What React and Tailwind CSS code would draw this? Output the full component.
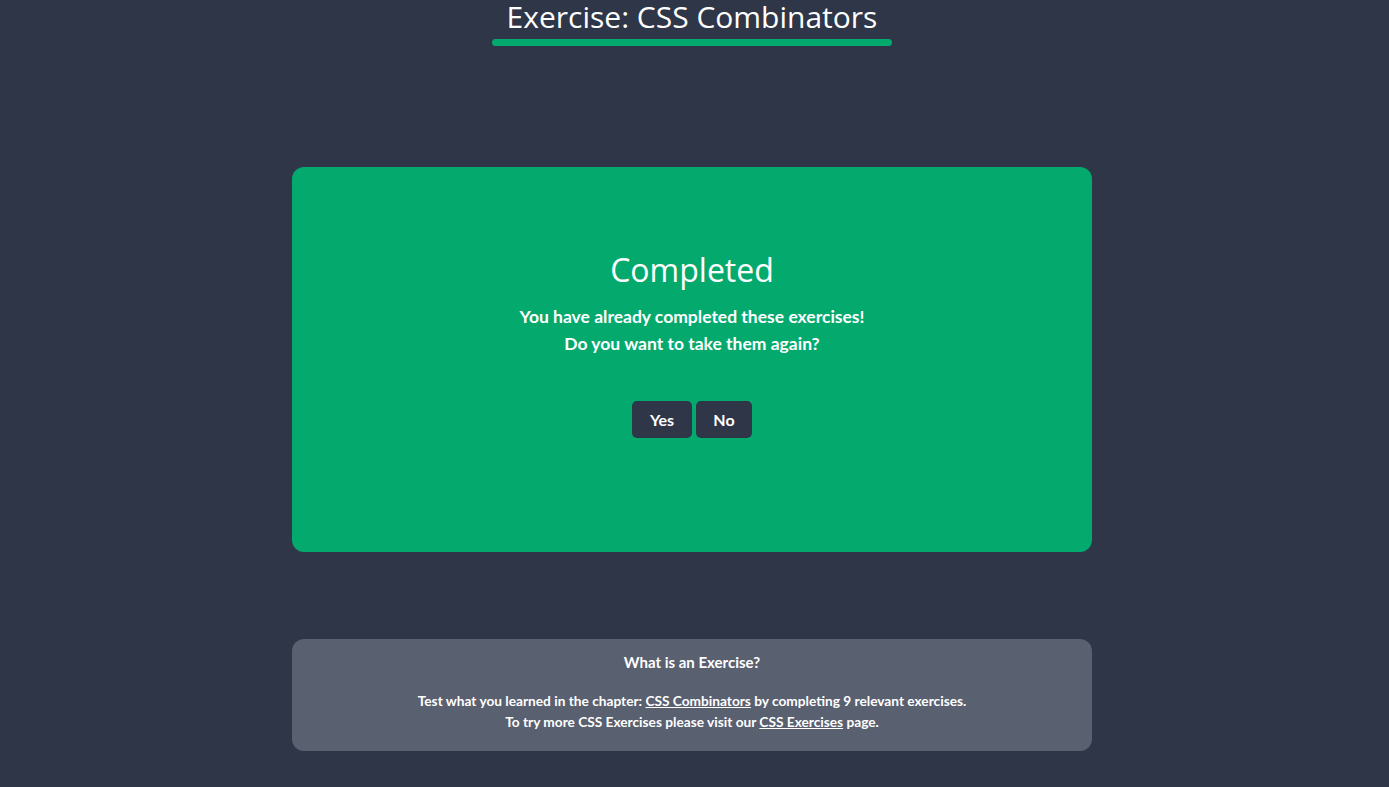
export default function App() {
  return (
    <div className="min-h-[787px] bg-[#2e3648] text-white flex flex-col items-center pr-[5px]" style={{ fontFamily: 'Lato, "Open Sans", sans-serif' }}>
      {/* Heading */}
      <div className="w-[400px] flex flex-col items-center">
        <h1 className="text-[30px] leading-[34px] font-normal" style={{ fontFamily: '"Open Sans", sans-serif' }}>
          Exercise: CSS Combinators
        </h1>
        <div className="mt-[5px] h-[7px] w-full rounded-full bg-[#04aa6d]" />
      </div>

      {/* Completed card */}
      <div className="mt-[121px] w-[800px] h-[385px] rounded-xl bg-[#04aa6d] flex flex-col items-center pt-[81px]">
        <h2 className="text-[32px] leading-[44px] font-normal" style={{ fontFamily: '"Open Sans", sans-serif' }}>
          Completed
        </h2>
        <p className="mt-[11px] text-[17.5px] leading-[27px] font-bold text-center">
          You have already completed these exercises!
          <br />
          Do you want to take them again?
        </p>
        <div className="mt-[44px] flex gap-[4px]">
          <button className="w-[60px] h-[37px] rounded-[5px] bg-[#2e3648] text-[16px] font-bold">Yes</button>
          <button className="w-[56px] h-[37px] rounded-[5px] bg-[#2e3648] text-[16px] font-bold">No</button>
        </div>
      </div>

      {/* Info box */}
      <div className="mt-[87px] w-[800px] h-[112px] rounded-xl bg-[#596070] flex flex-col items-center pt-[13px] font-bold">
        <p className="text-[15px] leading-[20px]">What is an Exercise?</p>
        <p className="mt-[18px] text-[13.7px] leading-[21px] text-center">
          Test what you learned in the chapter: <a href="#" className="underline">CSS Combinators</a> by completing 9 relevant exercises.
          <br />
          To try more CSS Exercises please visit our <a href="#" className="underline">CSS Exercises</a> page.
        </p>
      </div>
    </div>
  )
}
